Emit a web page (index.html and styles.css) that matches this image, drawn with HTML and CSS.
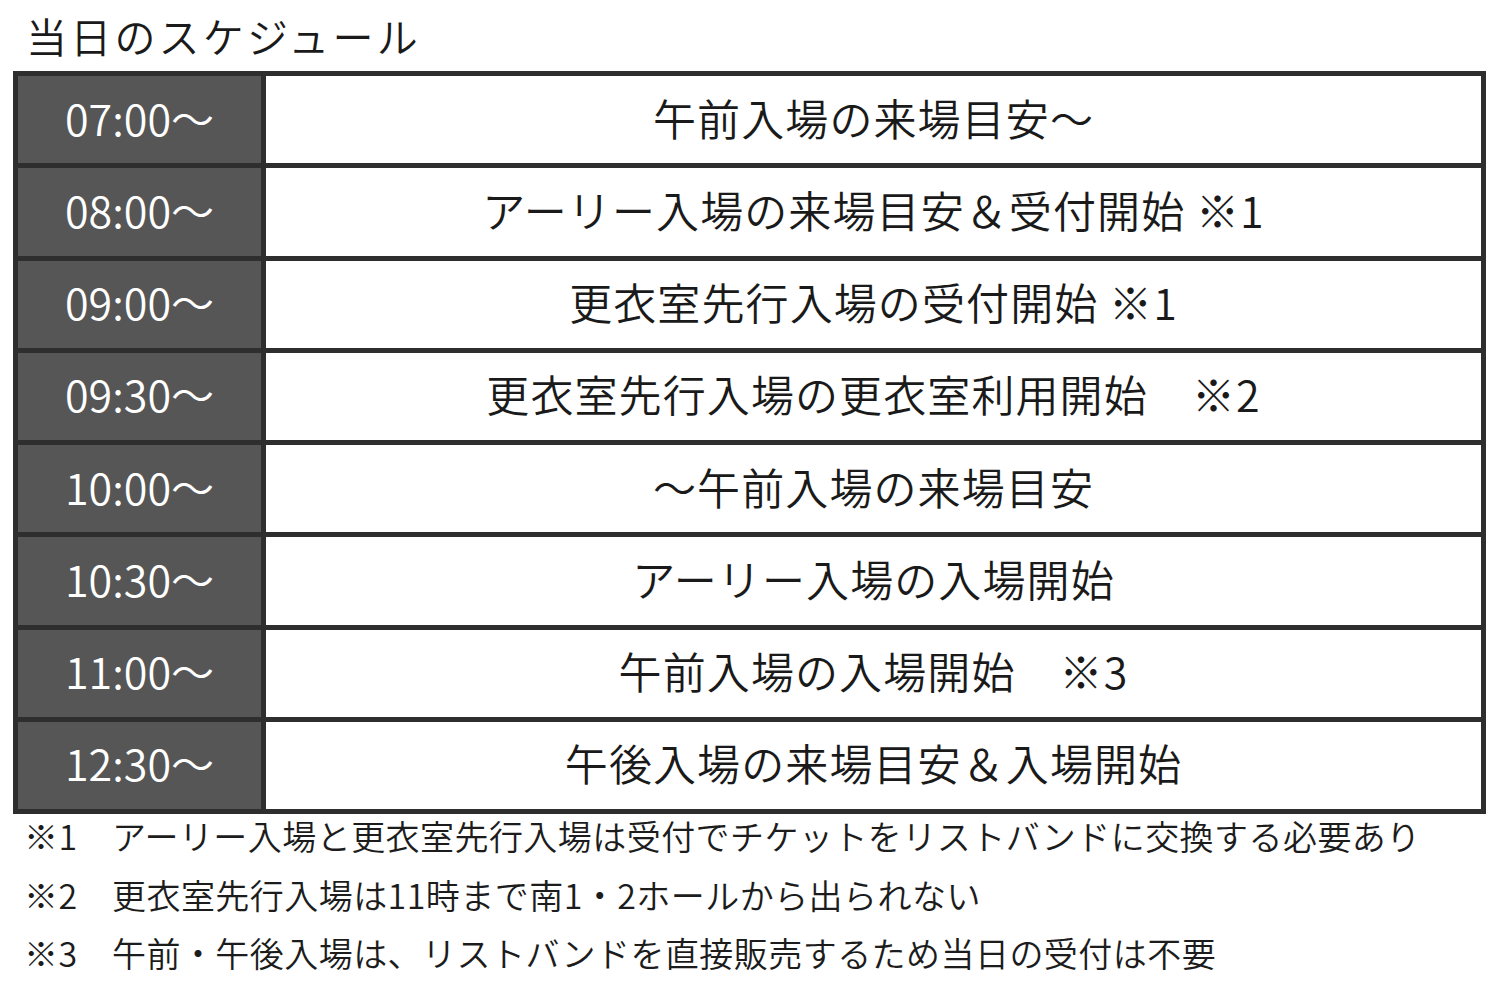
FILE: index.html
```html
<!DOCTYPE html>
<html lang="ja">
<head>
<meta charset="utf-8">
<title>当日のスケジュール</title>
<link rel="stylesheet" href="styles.css">
</head>
<body>
<div class="page">
  <h1 class="title">当日のスケジュール</h1>
  <div class="schedule">
    <div class="time">07:00～</div><div class="event">午前入場の来場目安～</div>
    <div class="time">08:00～</div><div class="event">アーリー入場の来場目安＆受付開始 ※1</div>
    <div class="time">09:00～</div><div class="event">更衣室先行入場の受付開始 ※1</div>
    <div class="time">09:30～</div><div class="event">更衣室先行入場の更衣室利用開始　※2</div>
    <div class="time">10:00～</div><div class="event">～午前入場の来場目安</div>
    <div class="time">10:30～</div><div class="event">アーリー入場の入場開始</div>
    <div class="time">11:00～</div><div class="event">午前入場の入場開始　※3</div>
    <div class="time">12:30～</div><div class="event">午後入場の来場目安＆入場開始</div>
  </div>
  <div class="notes">
    <p>※1　アーリー入場と更衣室先行入場は受付でチケットをリストバンドに交換する必要あり</p>
    <p>※2　更衣室先行入場は11時まで南1・2ホールから出られない</p>
    <p>※3　午前・午後入場は、リストバンドを直接販売するため当日の受付は不要</p>
  </div>
</div>
</body>
</html>
```
FILE: styles.css
```css
html, body {
  margin: 0;
  padding: 0;
  background: #ffffff;
}
body {
  font-family: "Noto Sans CJK JP", "Noto Sans", sans-serif;
  font-weight: 350;
  color: #1c1c1c;
}
.page {
  width: 1500px;
  height: 991px;
  padding-left: 13px;
  box-sizing: border-box;
}
.title {
  margin: 0;
  height: 71px;
  line-height: 70px;
  font-size: 41px;
  font-weight: 350;
  padding-left: 13px;
  letter-spacing: 3.2px;
  color: #1a1a1a;
}
.schedule {
  width: 1473px;
  box-sizing: border-box;
  display: grid;
  grid-template-columns: 243px 1fr;
  grid-template-rows: repeat(8, 87.25px);
  gap: 5px;
  padding: 5px;
  background: #2e2e2e;
}
.time, .event {
  display: flex;
  align-items: center;
  justify-content: center;
  font-size: 43px;
  padding-bottom: 6px;
  box-sizing: border-box;
  white-space: pre;
}
.time {
  background: #565656;
  color: #ffffff;
}
.event {
  background: #ffffff;
  color: #1a1a1a;
  letter-spacing: 1.1px;
}
.notes {
  margin-top: -7px;
  padding-left: 11px;
}
.notes p {
  margin: 0;
  font-size: 34px;
  line-height: 58.5px;
  letter-spacing: 0.45px;
  white-space: pre;
  color: #1c1c1c;
}
```
